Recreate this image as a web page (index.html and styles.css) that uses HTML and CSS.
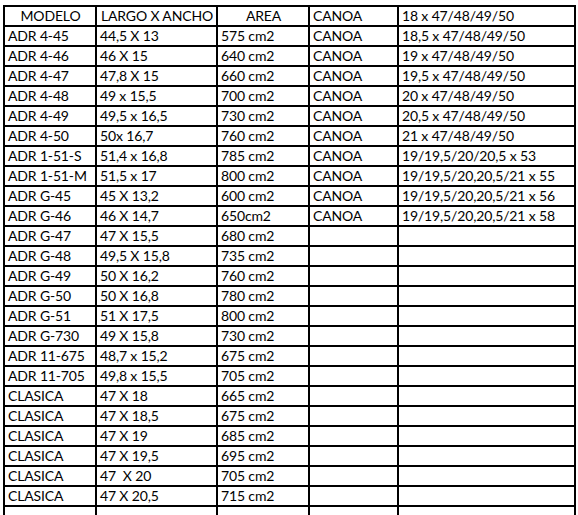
FILE: index.html
```html
<!DOCTYPE html>
<html>
<head>
<meta charset="utf-8">
<link rel="stylesheet" href="styles.css">
</head>
<body>
<div class="sheet">
<table class="grid">
<colgroup>
<col class="c1"><col class="c2"><col class="c3"><col class="c4"><col class="c5">
</colgroup>
<tr class="head"><td class="center">MODELO</td><td class="center">LARGO X ANCHO</td><td class="center">AREA</td><td>CANOA</td><td>18 x 47/48/49/50</td></tr>
<tr><td>ADR 4-45</td><td>44,5 X 13</td><td>575 cm2</td><td>CANOA</td><td>18,5 x 47/48/49/50</td></tr>
<tr><td>ADR 4-46</td><td>46 X 15</td><td>640 cm2</td><td>CANOA</td><td>19 x 47/48/49/50</td></tr>
<tr><td>ADR 4-47</td><td>47,8 X 15</td><td>660 cm2</td><td>CANOA</td><td>19,5 x 47/48/49/50</td></tr>
<tr><td>ADR 4-48</td><td>49 x 15,5</td><td>700 cm2</td><td>CANOA</td><td>20 x 47/48/49/50</td></tr>
<tr><td>ADR 4-49</td><td>49,5 x 16,5</td><td>730 cm2</td><td>CANOA</td><td>20,5 x 47/48/49/50</td></tr>
<tr><td>ADR 4-50</td><td>50x 16,7</td><td>760 cm2</td><td>CANOA</td><td>21 x 47/48/49/50</td></tr>
<tr><td>ADR 1-51-S</td><td>51,4 x 16,8</td><td>785 cm2</td><td>CANOA</td><td>19/19,5/20/20,5 x 53</td></tr>
<tr><td>ADR 1-51-M</td><td>51,5 x 17</td><td>800 cm2</td><td>CANOA</td><td>19/19,5/20,20,5/21 x 55</td></tr>
<tr><td>ADR G-45</td><td>45 X 13,2</td><td>600 cm2</td><td>CANOA</td><td>19/19,5/20,20,5/21 x 56</td></tr>
<tr><td>ADR G-46</td><td>46 X 14,7</td><td>650cm2</td><td>CANOA</td><td>19/19,5/20,20,5/21 x 58</td></tr>
<tr><td>ADR G-47</td><td>47 X 15,5</td><td>680 cm2</td><td></td><td></td></tr>
<tr><td>ADR G-48</td><td>49,5 X 15,8</td><td>735 cm2</td><td></td><td></td></tr>
<tr><td>ADR G-49</td><td>50 X 16,2</td><td>760 cm2</td><td></td><td></td></tr>
<tr><td>ADR G-50</td><td>50 X 16,8</td><td>780 cm2</td><td></td><td></td></tr>
<tr><td>ADR G-51</td><td>51 X 17,5</td><td>800 cm2</td><td></td><td></td></tr>
<tr><td>ADR G-730</td><td>49 X 15,8</td><td>730 cm2</td><td></td><td></td></tr>
<tr><td>ADR 11-675</td><td>48,7 x 15,2</td><td>675 cm2</td><td></td><td></td></tr>
<tr><td>ADR 11-705</td><td>49,8 x 15,5</td><td>705 cm2</td><td></td><td></td></tr>
<tr><td>CLASICA</td><td>47 X 18</td><td>665 cm2</td><td></td><td></td></tr>
<tr><td>CLASICA</td><td>47 X 18,5</td><td>675 cm2</td><td></td><td></td></tr>
<tr><td>CLASICA</td><td>47 X 19</td><td>685 cm2</td><td></td><td></td></tr>
<tr><td>CLASICA</td><td>47 X 19,5</td><td>695 cm2</td><td></td><td></td></tr>
<tr><td>CLASICA</td><td>47&nbsp; X 20</td><td>705 cm2</td><td></td><td></td></tr>
<tr><td>CLASICA</td><td>47 X 20,5</td><td>715 cm2</td><td></td><td></td></tr>
<tr class="tail"><td></td><td></td><td></td><td></td><td></td></tr>
</table>
</div>
</body>
</html>
```
FILE: styles.css
```css
html, body {
  margin: 0;
  padding: 0;
  background: #fff;
  overflow: hidden;
  height: 515px;
}
.sheet {
  padding: 5px 0 0 3px;
}
.grid {
  border-collapse: collapse;
  table-layout: fixed;
  width: 571px;
  font-family: Lato, "Liberation Sans", sans-serif;
  font-size: 14px;
  letter-spacing: -0.15px;
  color: #000;
}
.c1 { width: 92px; }
.c2 { width: 121px; }
.c3 { width: 92px; }
.c4 { width: 89px; }
.c5 { width: 177px; }
.grid td {
  height: 20px;
  padding: 0 2px 0 3px;
  border: 1px solid #000;
  border-bottom-width: 2px;
  border-left-width: 2px;
  border-right-width: 2px;
  vertical-align: bottom;
  line-height: 18px;
  white-space: nowrap;
  overflow: hidden;
  box-sizing: border-box;
}
.grid .head td {
  border-top-width: 2px;
}
.grid td.center {
  text-align: center;
}
.grid .tail td {
  border-bottom: none;
}
```
